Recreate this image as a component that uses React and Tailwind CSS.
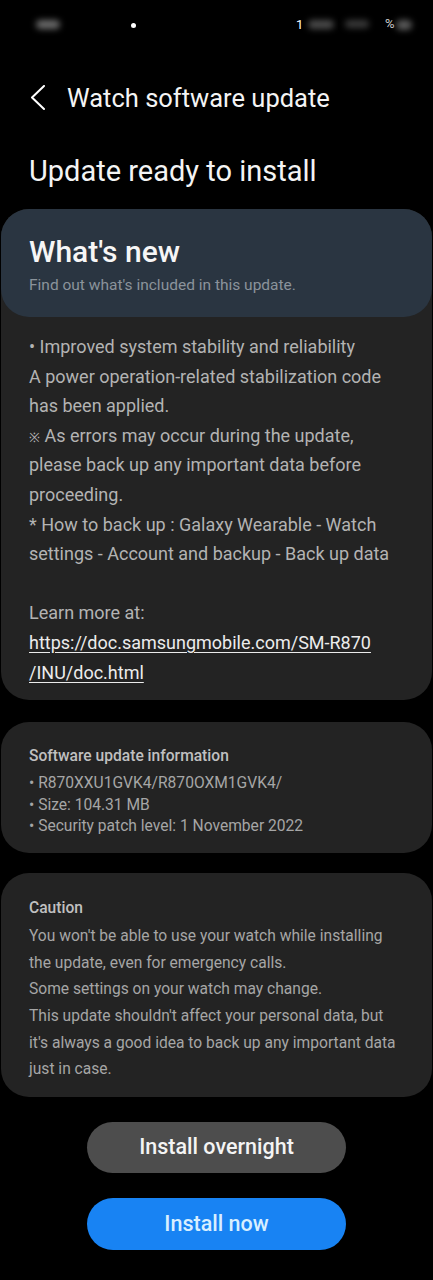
export default function App() {
  const whatsNew = [
    '• Improved system stability and reliability',
    'A power operation-related stabilization code',
    'has been applied.',
    null,
    'please back up any important data before',
    'proceeding.',
    '* How to back up : Galaxy Wearable - Watch',
    'settings - Account and backup - Back up data',
  ]

  const caution = [
    "You won't be able to use your watch while installing",
    'the update, even for emergency calls.',
    'Some settings on your watch may change.',
    "This update shouldn't affect your personal data, but",
    "it's always a good idea to back up any important data",
    'just in case.',
  ]

  return (
    <div className="w-[433px] min-h-[1280px] bg-black text-white font-['Roboto',sans-serif] pb-[30px]">
      {/* status bar (blurred) */}
      <div className="relative h-[50px]">
        <span className="absolute left-[36px] top-[20px] w-[24px] h-[9px] rounded-full bg-[#6a6a6a] blur-[3px]" />
        <span className="absolute left-[131px] top-[23px] w-[5px] h-[5px] rounded-full bg-white" />
        <span className="absolute left-[296px] top-[18px] text-[13px] leading-[14px] text-white">1</span>
        <span className="absolute left-[308px] top-[20px] w-[26px] h-[9px] rounded-full bg-[#4a4a4a] blur-[3px]" />
        <span className="absolute left-[345px] top-[20px] w-[24px] h-[8px] rounded-full bg-[#3a3a3a] blur-[3px]" />
        <span className="absolute left-[385px] top-[17px] text-[13px] leading-[14px] text-[#d0d0d0]">%</span>
        <span className="absolute left-[396px] top-[20px] w-[16px] h-[10px] rounded-full bg-[#5a5a5a] blur-[3px]" />
      </div>

      {/* header */}
      <div className="mt-[24px] h-[48px] flex items-center">
        <svg className="ml-[29px]" width="18" height="26" viewBox="0 0 18 26" fill="none">
          <path d="M15 1 L3 12.5 L15 24" stroke="#ffffff" strokeWidth="2" strokeLinecap="round" strokeLinejoin="round" />
        </svg>
        <span className="ml-[20px] text-[25.5px] leading-[30px] text-[#f4f4f4]">Watch software update</span>
      </div>

      <div className="mt-[31px] px-[29px] text-[29px] leading-[36px] text-[#f4f4f4]">Update ready to install</div>

      {/* what's new card */}
      <div className="mt-[20px] mx-[1px] rounded-[28px] bg-[#232323]">
        <div className="rounded-[28px] bg-[#2a3541] px-[28px] pt-[26px] pb-[22px]">
          <div className="text-[30px] leading-[34px] font-medium text-[#f6f6f6]">What's new</div>
          <div className="mt-[6px] text-[15.5px] leading-[20px] text-[#8b939b]">Find out what's included in this update.</div>
        </div>
        <div className="px-[28px] pt-[15px] pb-[13px] text-[18px] leading-[29.6px] text-[#b3b3b3] whitespace-nowrap">
          {whatsNew.map((line, i) =>
            line ? (
              <div key={i} className="h-[29.6px]">{line}</div>
            ) : (
              <div key={i} className="h-[29.6px]">
                <span className="text-[13px] leading-none">※</span> As errors may occur during the update,
              </div>
            )
          )}
          <div className="h-[29.6px]" />
          <div>Learn more at:</div>
          <div className="text-[#ececec] underline underline-offset-[3px]">https://doc.samsungmobile.com/SM-R870</div>
          <div className="text-[#ececec] underline underline-offset-[3px]">/INU/doc.html</div>
        </div>
      </div>

      {/* software update information */}
      <div className="mt-[22px] mx-[1px] rounded-[28px] bg-[#232323] px-[28px] pt-[23px] pb-[15px] whitespace-nowrap">
        <div className="text-[15.6px] leading-[22px] font-medium text-[#c0c0c0]">Software update information</div>
        <div className="mt-[6px] text-[15.6px] leading-[21.5px] text-[#a6a6a6]">
          <div>• R870XXU1GVK4/R870OXM1GVK4/</div>
          <div>• Size: 104.31 MB</div>
          <div>• Security patch level: 1 November 2022</div>
        </div>
      </div>

      {/* caution */}
      <div className="mt-[20px] mx-[1px] rounded-[28px] bg-[#232323] px-[28px] pt-[22px] pb-[14px] whitespace-nowrap">
        <div className="text-[15.6px] leading-[26.6px] font-medium text-[#c0c0c0]">Caution</div>
        <div className="mt-[2px] text-[15.6px] leading-[26.6px] text-[#a6a6a6]">
          {caution.map((line) => (
            <div key={line}>{line}</div>
          ))}
        </div>
      </div>

      {/* buttons */}
      <div className="mt-[25px] flex flex-col items-center gap-[25px]">
        <button className="w-[259px] h-[51px] rounded-full bg-[#4d4d4d] text-[21.5px] font-medium text-[#f4f4f4]">
          Install overnight
        </button>
        <button className="w-[259px] h-[52px] rounded-full bg-[#1883f3] text-[21.5px] font-medium text-[#d8efff]">
          Install now
        </button>
      </div>
    </div>
  )
}
